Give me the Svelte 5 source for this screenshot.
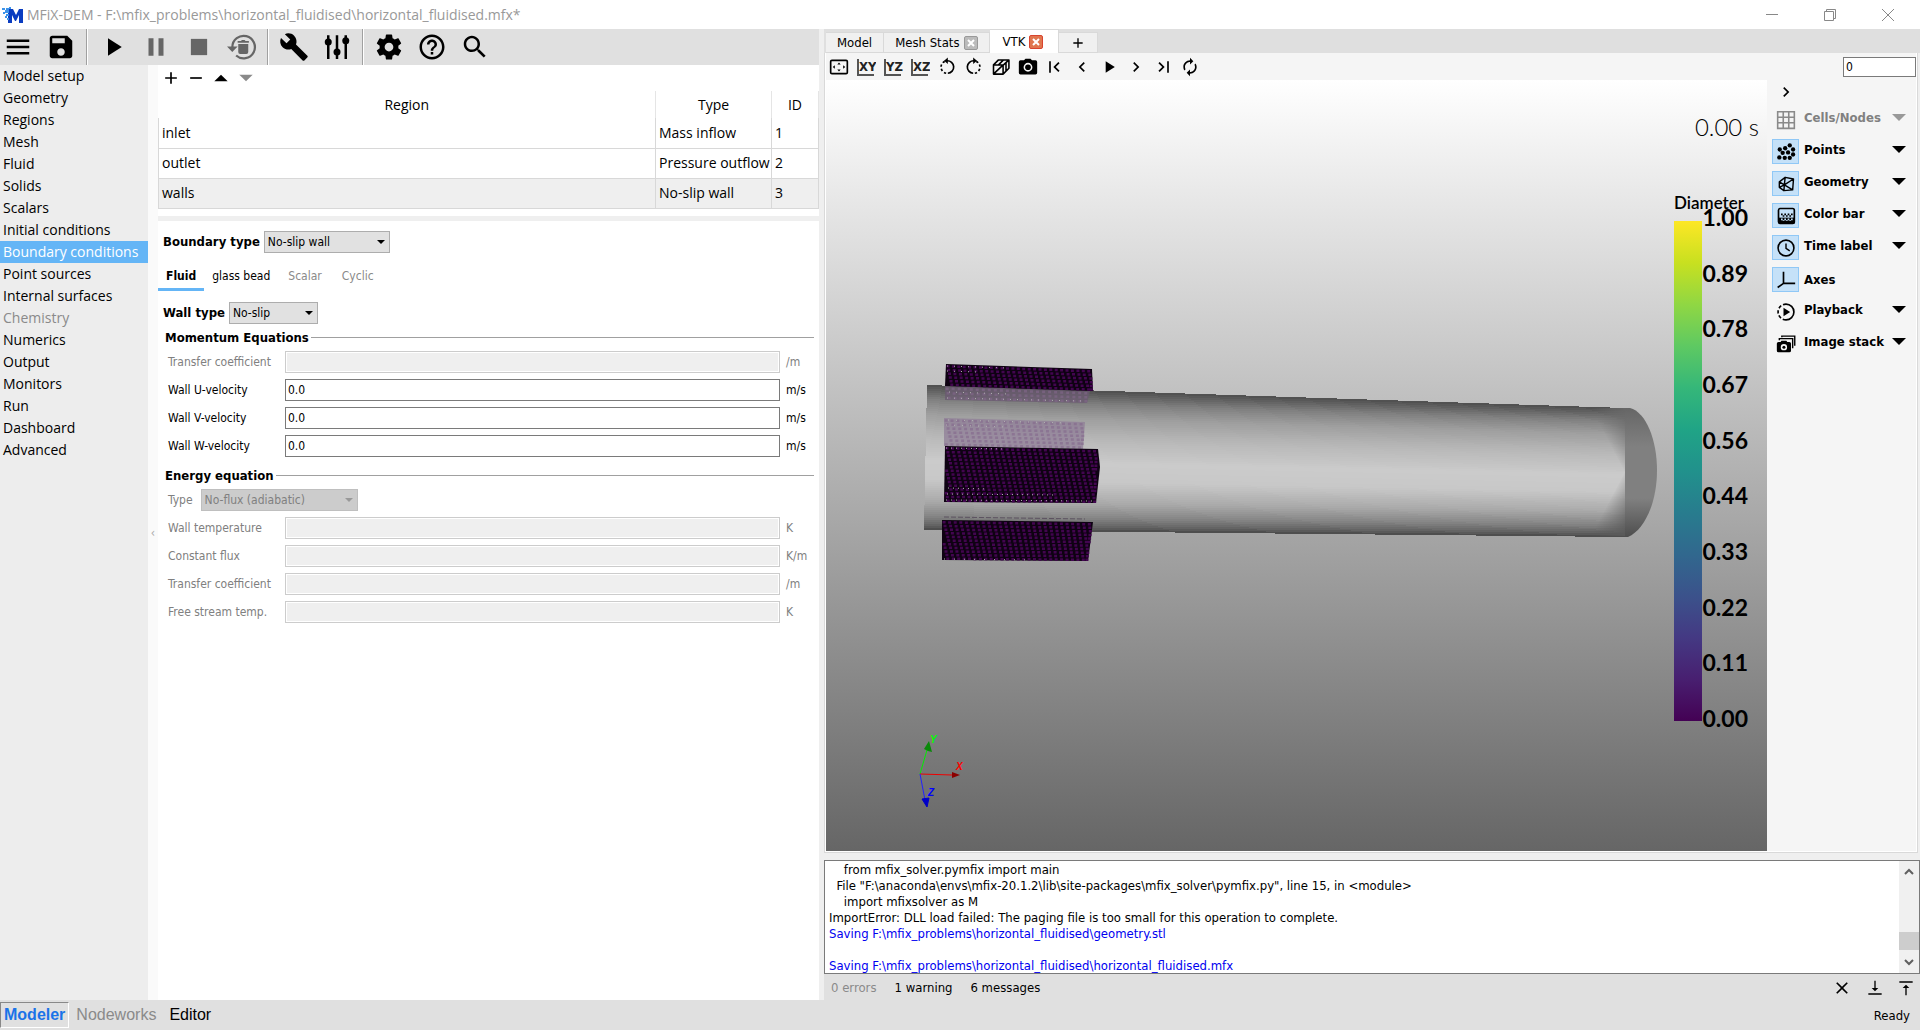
<script>
    const iconPaths = {
        menu: '<path d="M3 18h18v-2H3zm0-5h18v-2H3zm0-7v2h18V6z"/>',
        save: '<path d="M17 3H5c-1.11 0-2 .9-2 2v14c0 1.1.89 2 2 2h14c1.1 0 2-.9 2-2V7l-4-4zm-5 16c-1.66 0-3-1.34-3-3s1.34-3 3-3 3 1.34 3 3-1.34 3-3 3zm3-10H5V5h10v4z"/>',
        play: '<path d="M8 5v14l11-7z"/>',
        pause: '<path d="M6 19h4V5H6zm8-14v14h4V5z"/>',
        stop: '<path d="M5.500 5.500h13v13h-13z"/>',
        reset: '<path d="M4.300 12a9 9 0 1 1 3 6.800" fill="none" stroke="currentColor" stroke-width="1.800"/><path d="M0 11.500h8.500L4.200 16zM9 9.500h8V16a1.500 1.500 0 0 1-1.500 1.500h-5A1.500 1.500 0 0 1 9 16zM8.500 7.200h2.700l.7-.8h2.200l.7.8h2.700v1.300h-9z"/>',
        wrench: '<path d="M22.700 19l-9.100-9.100c.9-2.300.4-5-1.500-6.900-2-2-5-2.400-7.400-1.300L9 6 6 9 1.600 4.700C.4 7.100.9 10.100 2.900 12.100c1.900 1.900 4.600 2.400 6.900 1.500l9.100 9.100c.4.400 1 .4 1.400 0l2.300-2.300c.5-.4.5-1.100.1-1.400z"/>',
        sliders: '<path d="M4 2.500h2v19H4zM11 2.500h2v19h-2zM18 2.500h2v19h-2z"/><circle cx="5" cy="8" r="2.800"/><circle cx="12" cy="16" r="2.800"/><circle cx="19" cy="7" r="2.800"/>',
        gear: '<path d="M19.430 12.980c.04-.32.070-.64.070-.98s-.03-.66-.07-.98l2.110-1.650c.19-.15.240-.42.120-.64l-2-3.460c-.12-.22-.39-.3-.61-.22l-2.490 1c-.52-.4-1.080-.73-1.690-.98l-.38-2.650C14.460 2.180 14.250 2 14 2h-4c-.25 0-.46.180-.49.420l-.38 2.650c-.61.250-1.170.590-1.690.980l-2.490-1c-.23-.09-.49 0-.61.220l-2 3.460c-.13.220-.07.490.120.640l2.110 1.650c-.04.320-.07.650-.07.980s.03.660.070.980l-2.110 1.650c-.19.150-.24.420-.12.640l2 3.460c.12.220.390.300.610.220l2.490-1c.52.400 1.080.730 1.690.980l.38 2.650c.03.240.240.420.490.420h4c.25 0 .46-.18.490-.42l.38-2.650c.61-.25 1.170-.59 1.690-.98l2.490 1c.23.090.490 0 .61-.22l2-3.460c.12-.22.070-.49-.12-.64l-2.110-1.650zM12 15.500c-1.930 0-3.500-1.570-3.500-3.500s1.570-3.500 3.500-3.500 3.500 1.570 3.500 3.500-1.570 3.500-3.500 3.500z"/>',
        help: '<path d="M11 18h2v-2h-2zm1-16C6.480 2 2 6.480 2 12s4.480 10 10 10 10-4.480 10-10S17.520 2 12 2zm0 18c-4.410 0-8-3.590-8-8s3.590-8 8-8 8 3.590 8 8-3.590 8-8 8zm0-14c-2.210 0-4 1.790-4 4h2c0-1.100.9-2 2-2s2 .9 2 2c0 2-3 1.750-3 5h2c0-2.250 3-2.500 3-5 0-2.210-1.790-4-4-4z"/>',
        search: '<path d="M15.500 14h-.79l-.28-.27C15.410 12.590 16 11.110 16 9.500 16 5.910 13.090 3 9.500 3S3 5.910 3 9.500 5.910 16 9.500 16c1.610 0 3.090-.59 4.230-1.570l.27.280v.79l5 4.990L20.490 19l-4.990-5zm-6 0C7.010 14 5 11.990 5 9.500S7.010 5 9.500 5 14 7.010 14 9.500 11.990 14 9.500 14z"/>',
        plus: '<path d="M11 5h2v6h6v2h-6v6h-2v-6H5v-2h6z"/>',
        minus: '<path d="M5 11h14v2H5z"/>',
        up: '<path d="M4 16l8-8 8 8z"/>',
        down: '<path d="M4 8h16l-8 8z"/>',
        frame: '<rect x="2" y="4" width="20" height="16" rx="1.500" fill="none" stroke="currentColor" stroke-width="2"/><path d="M12 6.500l2 2.500h-4zM12 17.500l2-2.500h-4zM4.500 12L7 10v4zM19.500 12L17 10v4z"/>',
        rotateLeft: '<path d="M12 4.500a7.500 7.500 0 0 1 1 15" fill="none" stroke="currentColor" stroke-width="2"/><path d="M11 19.500a7.500 7.500 0 0 1-1-14.500" fill="none" stroke="currentColor" stroke-width="2" stroke-dasharray="2.800 2.500"/><path d="M13 .5v8L8.500 4.500z"/>',
        rotateRight: '<path d="M12 4.500a7.500 7.500 0 0 0-1 15" fill="none" stroke="currentColor" stroke-width="2"/><path d="M13 19.500A7.500 7.500 0 0 0 14 5" fill="none" stroke="currentColor" stroke-width="2" stroke-dasharray="2.800 2.500"/><path d="M11 .5v8l4.500-4z"/>',
        cube: '<path d="M3 9.500l6-6h12.500L15 9.500zM3 9.500v11h11.500v-11M21.500 3.500v10l-7 7M3.500 20L14 10M9 9.500l6-6M18 7v10" fill="none" stroke="currentColor" stroke-width="1.900" stroke-linejoin="round"/>',
        camera: '<path fill-rule="evenodd" d="M9 2L7.200 4H3a2 2 0 0 0-2 2v13a2 2 0 0 0 2 2h18a2 2 0 0 0 2-2V6a2 2 0 0 0-2-2h-4.200L15 2zm3 5a5.300 5.300 0 1 1 0 10.600A5.300 5.300 0 0 1 12 7z"/><circle cx="12" cy="12.300" r="3.400"/>',
        first: '<path d="M5 5h2v14H5zM17.500 7.400L16 6l-6 6 6 6 1.500-1.400L12.900 12z"/>',
        prev: '<path d="M15.400 7.400L14 6l-6 6 6 6 1.400-1.400-4.600-4.600z"/>',
        next: '<path d="M10 6L8.600 7.400l4.600 4.600-4.600 4.600L10 18l6-6z"/>',
        last: '<path d="M17 5h2v14h-2zM6.500 7.400L8 6l6 6-6 6-1.500-1.400L11.100 12z"/>',
        loop: '<path d="M12 6v3l4-4-4-4v3c-4.420 0-8 3.580-8 8 0 1.570.460 3.030 1.240 4.260L6.700 14.800c-.45-.83-.7-1.790-.7-2.800 0-3.310 2.690-6 6-6zm6.760 1.740L17.300 9.200c.44.840.7 1.790.7 2.800 0 3.310-2.690 6-6 6v-3l-4 4 4 4v-3c4.420 0 8-3.580 8-8 0-1.570-.46-3.030-1.240-4.260z"/>',
        grid: '<path d="M2 2h20v20H2zM2 8.700h20M2 15.300h20M8.700 2v20M15.300 2v20" fill="none" stroke="currentColor" stroke-width="1.900"/>',
        points: '<circle cx="4.500" cy="9" r="2.600"/><circle cx="11" cy="7.500" r="2.600"/><circle cx="16.500" cy="4" r="2.600"/><circle cx="20.500" cy="9" r="2.600"/><circle cx="8" cy="13" r="2.600"/><circle cx="14.500" cy="12.500" r="2.600"/><circle cx="20.500" cy="15" r="2.600"/><circle cx="4" cy="18.500" r="2.600"/><circle cx="10.500" cy="19" r="2.600"/><circle cx="16.500" cy="19" r="2.600"/>',
        geometry: '<path d="M4 9.500l7-5.500 10 2-1 13-10.500 1L4 16zM4 9.500l6 3.500 11-7M11 4l-1 9 10 6M10 13l-6 3M10 13l-.5 7" fill="none" stroke="currentColor" stroke-width="1.700" stroke-linejoin="round"/>',
        colorbar: '<rect x="3" y="3" width="19" height="18" rx="2" fill="none" stroke="currentColor" stroke-width="2"/><path d="M3 14h19v7H3z"/><path d="M6 9h2v2H6zM10 9h2v2h-2zM14 9h2v2h-2zM18 9h2v2h-2zM8 11h2v2H8zM12 11h2v2h-2zM16 11h2v2h-2z"/><path fill="#c5e1f8" d="M6 15h2v2H6zM10 15h2v2h-2zM14 15h2v2h-2zM18 15h2v2h-2zM8 17h2v1H8zM12 17h2v1h-2zM16 17h2v1h-2z"/>',
        clock: '<circle cx="12" cy="12" r="9.500" fill="none" stroke="currentColor" stroke-width="1.900"/><path d="M12 6.500v6l4.500 3" fill="none" stroke="currentColor" stroke-width="1.700"/>',
        axes: '<path d="M9 2v14h14M9 16l-7 5" fill="none" stroke="currentColor" stroke-width="2"/>',
        playback: '<path d="M12 2.500a9.500 9.500 0 0 1 0 19" fill="none" stroke="currentColor" stroke-width="2"/><path d="M12 21.500a9.500 9.500 0 0 1 0-19" fill="none" stroke="currentColor" stroke-width="2" stroke-dasharray="4 2.500"/><path d="M9 7v10l8-5z"/>',
        stack: '<path fill-rule="evenodd" d="M6.500 8L5.500 9.500H3a2 2 0 0 0-2 2V20a2 2 0 0 0 2 2h13a2 2 0 0 0 2-2v-8.500a2 2 0 0 0-2-2h-2.500L12.500 8zm3 4a3.800 3.800 0 1 1 0 7.600 3.800 3.800 0 0 1 0-7.600z"/><circle cx="9.500" cy="15.800" r="1.800"/><path d="M4 7.500V5.500h16V17M7 4V2.500h15.500V14" fill="none" stroke="currentColor" stroke-width="1.700"/>',
        close: '<path d="M19 6.400L17.600 5 12 10.600 6.400 5 5 6.400l5.600 5.600L5 17.600 6.400 19l5.600-5.600 5.600 5.600 1.400-1.400-5.600-5.600z"/>',
        toBottom: '<path d="M11 1h2v11h4l-5 5-5-5h4zM2 20h20v2H2z"/>',
        toTop: '<path d="M2 2h20v2H2zM11 23h2V12h4l-5-5-5 5h4z"/>'
    }

    const mainTools = [
        { icon: "menu" }, { icon: "save" }, null,
        { icon: "play" }, { icon: "pause", off: true }, { icon: "stop", off: true }, { icon: "reset", off: true }, null,
        { icon: "wrench" }, { icon: "sliders" }, null,
        { icon: "gear" }, { icon: "help" }, { icon: "search" }
    ]

    const pages = [
        "Model setup", "Geometry", "Regions", "Mesh", "Fluid", "Solids", "Scalars", "Initial conditions",
        "Boundary conditions", "Point sources", "Internal surfaces", "Chemistry", "Numerics", "Output",
        "Monitors", "Run", "Dashboard", "Advanced"
    ]
    let currentPage = "Boundary conditions"

    const regions = [
        { name: "inlet", type: "Mass inflow", id: 1 },
        { name: "outlet", type: "Pressure outflow", id: 2 },
        { name: "walls", type: "No-slip wall", id: 3 }
    ]
    let currentRegion = 3

    const momentum = [
        { id: "mom-coeff", label: "Transfer coefficient", unit: "/m", off: true },
        { id: "mom-u", label: "Wall U-velocity", unit: "m/s", value: "0.0" },
        { id: "mom-v", label: "Wall V-velocity", unit: "m/s", value: "0.0" },
        { id: "mom-w", label: "Wall W-velocity", unit: "m/s", value: "0.0" }
    ]
    const energy = [
        { id: "en-temp", label: "Wall temperature", unit: "K", off: true },
        { id: "en-flux", label: "Constant flux", unit: "K/m", off: true },
        { id: "en-coeff", label: "Transfer coefficient", unit: "/m", off: true },
        { id: "en-free", label: "Free stream temp.", unit: "K", off: true }
    ]

    const vtkTools = [
        "frame", "XY", "YZ", "XZ", "rotateLeft", "rotateRight", "cube", "camera",
        "first", "prev", "play", "next", "last", "loop"
    ]

    const layers = [
        { label: "Cells/Nodes", icon: "grid", off: true, menu: true },
        { label: "Points", icon: "points", on: true, menu: true },
        { label: "Geometry", icon: "geometry", on: true, menu: true },
        { label: "Color bar", icon: "colorbar", on: true, menu: true },
        { label: "Time label", icon: "clock", on: true, menu: true },
        { label: "Axes", icon: "axes", on: true },
        { label: "Playback", icon: "playback", menu: true },
        { label: "Image stack", icon: "stack", menu: true }
    ]

    const log = [
        { text: "    from mfix_solver.pymfix import main" },
        { text: "  File \"F:\\anaconda\\envs\\mfix-20.1.2\\lib\\site-packages\\mfix_solver\\pymfix.py\", line 15, in <module>" },
        { text: "    import mfixsolver as M" },
        { text: "ImportError: DLL load failed: The paging file is too small for this operation to complete." },
        { text: "Saving F:\\mfix_problems\\horizontal_fluidised\\geometry.stl", info: true },
        { text: " " },
        { text: "Saving F:\\mfix_problems\\horizontal_fluidised\\horizontal_fluidised.mfx", info: true }
    ]

    const ticks = ["0.00", "0.11", "0.22", "0.33", "0.44", "0.56", "0.67", "0.78", "0.89", "1.00"]
    const viridis = ["#fde725", "#c8e020", "#90d743", "#5ec962", "#35b779", "#20a486", "#21918c", "#287c8e", "#31688e", "#3b528b", "#443983", "#481f70", "#440154"]

    // grey level over the height of the tube, 0 = top edge
    const shade = [[0, 78], [0.04, 98], [0.1, 128], [0.2, 158], [0.35, 184], [0.52, 203], [0.65, 200], [0.8, 170], [0.9, 135], [0.97, 98], [1, 72]]

    function greyAt(t) {
        const i = Math.max(1, shade.findIndex(([stop]) => stop >= t))
        const [t0, g0] = shade[i - 1]
        const [t1, g1] = shade[i]
        return Math.round(g0 + ((g1 - g0) * (t - t0)) / (t1 - t0))
    }

    // the tube tapers, so it is shaded in thin bands that follow both edges
    const bandCount = 72
    const bands = Array.from({ length: bandCount }, (_, i) => {
        const a = i / bandCount
        const b = Math.min(1, (i + 1.6) / bandCount)
        const g = greyAt((i + 0.5) / bandCount)
        const left = (t) => `${101 - 3 * t},${305 + 145 * t}`
        const right = (t) => `799,${328 + 129 * t}`
        return { points: `${left(a)} ${right(a)} ${right(b)} ${left(b)}`, fill: `rgb(${g},${g},${g})` }
    })

    // particles on a quad: corners are top-left, top-right, bottom-right, bottom-left
    function particles([tl, tr, br, bl], cols, rows) {
        let d = ""
        for (let r = 0; r < rows; r++) {
            for (let c = 0; c < cols; c++) {
                const v = (r + 0.3) / rows
                const u = Math.min(0.98, (c + 0.1 + ((r * 0.17) % 1)) / cols)
                const x = (1 - v) * (tl[0] + (tr[0] - tl[0]) * u) + v * (bl[0] + (br[0] - bl[0]) * u)
                const y = (1 - v) * (tl[1] + (tr[1] - tl[1]) * u) + v * (bl[1] + (br[1] - bl[1]) * u)
                d += `M${x.toFixed(1)} ${y.toFixed(1)}h3v2.5h-3z`
            }
        }
        return d
    }

    const blocks = [
        { quad: [[120, 284], [266, 289], [267, 311], [119, 306]], cols: 27, rows: 6 },
        { quad: [[119, 366], [272, 369], [274, 387], [270, 423], [118, 422]], cols: 28, rows: 15 },
        { quad: [[116, 440], [267, 442], [262, 481], [116, 480]], cols: 27, rows: 11 }
    ].map((b) => {
        const corners = b.quad.length === 5 ? [b.quad[0], b.quad[1], b.quad[3], b.quad[4]] : b.quad
        return { outline: b.quad.join(" "), dots: particles(corners, b.cols, b.rows) }
    })

    const ghosts = [
        [[119, 306], [264, 311], [261, 323], [119, 320]],
        [[118, 338], [259, 342], [257, 369], [118, 366]]
    ].map((quad, i) => ({
        outline: quad.join(" "),
        dots: particles(quad, 24, i ? 7 : 3),
        fill: i ? "#8f7d97" : "#6a5a70"
    }))
</script>

{#snippet icon(name, size)}
    <svg class="icon" width={size} height={size} viewBox="0 0 24 24" fill="currentColor" aria-hidden="true">{@html iconPaths[name]}</svg>
{/snippet}

{#snippet fieldRow(field)}
    <div class="field" class:off={field.off}>
        <label for={field.id}>{field.label}</label>
        <input id={field.id} type="text" value={field.value ?? ""} disabled={field.off} />
        <span class="unit">{field.unit}</span>
    </div>
{/snippet}

<div class="app">
    <header class="titlebar">
        <svg class="logo" width="22" height="18" viewBox="0 0 22 18" aria-hidden="true">
            <path d="M6 3h5l3 6 3-6h4v14h-4V9l-3 6h-1l-3-6v8H6z" fill="#0a3cc0" />
            <path d="M0 2h3v2H0zM4 2h3v2H4zM3 4h4v3H3zM1 6h2v2H1zM4 8h3v2H4zM7 1h2v2H7zM3 10h2v2H3zM5 12h2v2H5z" fill="#3d93e8" />
        </svg>
        <h1>MFiX-DEM - F:\mfix_problems\horizontal_fluidised\horizontal_fluidised.mfx*</h1>
        <div class="window-buttons">
            <button aria-label="Minimize"><svg width="12" height="12" viewBox="0 0 12 12"><path d="M0 5.500h12" /></svg></button>
            <button aria-label="Restore"><svg width="12" height="12" viewBox="0 0 12 12"><path d="M.5 2.500h9v9h-9zM2.500 2.500v-2h9v9h-2" /></svg></button>
            <button aria-label="Close"><svg width="12" height="12" viewBox="0 0 12 12"><path d="M0 0l12 12M12 0L0 12" /></svg></button>
        </div>
    </header>

    <main>
        <section class="modeler">
            <div class="main-tools">
                {#each mainTools as tool}
                    {#if tool}
                        <button disabled={tool.off} aria-label={tool.icon}>{@render icon(tool.icon, 30)}</button>
                    {:else}
                        <span class="separator"></span>
                    {/if}
                {/each}
            </div>

            <div class="workspace">
                <nav>
                    {#each pages as page}
                        <button
                            class:active={page === currentPage}
                            disabled={page === "Chemistry"}
                            on:click={() => (currentPage = page)}
                        >{page}</button>
                    {/each}
                </nav>
                <div class="gutter">‹</div>

                <div class="pane">
                    <div class="list-tools">
                        <button aria-label="Add">{@render icon("plus", 20)}</button>
                        <button aria-label="Remove">{@render icon("minus", 20)}</button>
                        <button aria-label="Move up">{@render icon("up", 20)}</button>
                        <button aria-label="Move down" disabled>{@render icon("down", 20)}</button>
                    </div>

                    <table>
                        <thead>
                            <tr><th>Region</th><th class="type">Type</th><th class="id">ID</th></tr>
                        </thead>
                        <tbody>
                            {#each regions as region}
                                <tr class:selected={region.id === currentRegion} on:click={() => (currentRegion = region.id)}>
                                    <td>{region.name}</td>
                                    <td>{region.type}</td>
                                    <td>{region.id}</td>
                                </tr>
                            {/each}
                        </tbody>
                    </table>

                    <div class="splitter"></div>

                    <div class="form">
                        <div class="choice">
                            <label for="boundary-type">Boundary type</label>
                            <span class="combo wide">
                                <select id="boundary-type"><option>No-slip wall</option></select>
                                <i></i>
                            </span>
                        </div>

                        <div class="subtabs">
                            <button class="active">Fluid</button>
                            <button>glass bead</button>
                            <button disabled>Scalar</button>
                            <button disabled>Cyclic</button>
                        </div>

                        <div class="choice">
                            <label for="wall-type">Wall type</label>
                            <span class="combo narrow">
                                <select id="wall-type"><option>No-slip</option></select>
                                <i></i>
                            </span>
                        </div>

                        <h2>Momentum Equations</h2>
                        <div class="fields">
                            {#each momentum as field}
                                {@render fieldRow(field)}
                            {/each}
                        </div>

                        <h2>Energy equation</h2>
                        <div class="fields">
                            <div class="choice off">
                                <label for="energy-type">Type</label>
                                <span class="combo energy">
                                    <select id="energy-type" disabled><option>No-flux (adiabatic)</option></select>
                                    <i></i>
                                </span>
                            </div>
                            {#each energy as field}
                                {@render fieldRow(field)}
                            {/each}
                        </div>
                    </div>
                </div>
            </div>
        </section>

        <section class="viewer">
            <div class="tabs">
                <div class="tab"><button>Model</button></div>
                <div class="tab">
                    <button>Mesh Stats</button>
                    <button class="close" aria-label="Close Mesh Stats"><svg width="8" height="8" viewBox="0 0 8 8"><path d="M1 1l6 6M7 1L1 7" /></svg></button>
                </div>
                <div class="tab current">
                    <button>VTK</button>
                    <button class="close" aria-label="Close VTK"><svg width="8" height="8" viewBox="0 0 8 8"><path d="M1 1l6 6M7 1L1 7" /></svg></button>
                </div>
                <div class="tab"><button aria-label="New tab">{@render icon("plus", 16)}</button></div>
            </div>

            <div class="vtk">
                <div class="vtk-tools">
                    {#each vtkTools as tool}
                        <button aria-label={tool}>
                            {#if iconPaths[tool]}
                                {@render icon(tool, 20)}
                            {:else}
                                <svg class="plane" width="20" height="20" viewBox="0 0 20 20">
                                    <path d="M2 2v16h16" />
                                    <text x="3" y="14">{tool}</text>
                                </svg>
                            {/if}
                        </button>
                    {/each}
                    <input class="frame-number" type="text" value="0" aria-label="Frame" />
                </div>

                <div class="scene-row">
                    <div class="scene">
                        <svg viewBox="0 0 941 771">
                            <defs>
                                <linearGradient id="viridis" x1="0" y1="0" x2="0" y2="1">
                                    {#each viridis as color, i}
                                        <stop offset={i / (viridis.length - 1)} stop-color={color} />
                                    {/each}
                                </linearGradient>
                                <linearGradient id="cap" x1="0" y1="0" x2="0" y2="1">
                                    <stop offset="0" stop-color="#666" />
                                    <stop offset="0.3" stop-color="#808080" />
                                    <stop offset="0.7" stop-color="#808080" />
                                    <stop offset="1" stop-color="#4e4e4e" />
                                </linearGradient>
                                <linearGradient id="cone-top" gradientUnits="userSpaceOnUse" x1="772" y1="342" x2="799" y2="328">
                                    <stop offset="0" stop-color="#6a6a6a" stop-opacity="0" />
                                    <stop offset="1" stop-color="#6a6a6a" stop-opacity="0.9" />
                                </linearGradient>
                                <linearGradient id="cone-bottom" gradientUnits="userSpaceOnUse" x1="772" y1="442" x2="799" y2="456">
                                    <stop offset="0" stop-color="#5a5a5a" stop-opacity="0" />
                                    <stop offset="1" stop-color="#5a5a5a" stop-opacity="0.9" />
                                </linearGradient>
                            </defs>

                            <path d="M798 328h6C820 332 831 360 831 390C831 424 818 450 802 457H798z" fill="url(#cap)" />
                            <g shape-rendering="crispEdges">
                                {#each bands as band}
                                    <polygon points={band.points} fill={band.fill} />
                                {/each}
                            </g>
                            <path d="M765 328h34v64z" fill="url(#cone-top)" />
                            <path d="M765 456h34v-64z" fill="url(#cone-bottom)" />

                            {#each ghosts as ghost}
                                <polygon points={ghost.outline} fill={ghost.fill} fill-opacity="0.75" />
                                <path d={ghost.dots} fill="#83688c" fill-opacity="0.6" />
                            {/each}
                            {#each blocks as block}
                                <polygon points={block.outline} fill="#0e0212" />
                                <path d={block.dots} fill="#42054f" />
                            {/each}
                            <path d="M118 437l141 2" stroke="#5c5260" stroke-dasharray="5 2" />
                            <g class="gaps">
                                <path d="M120 420l146 1M121 414l110 1M120 368l60 1M122 408l40 1" stroke-dasharray="1 4" />
                                <path d="M122 340l120 3M120 345l60 2" stroke-dasharray="1 7" />
                                <path d="M121 286l60 2M121 291l30 1" stroke-dasharray="1 6" />
                                <path d="M118 479l90 1" stroke-dasharray="1 9" />
                                <path d="M121 318l135 3M123 312l60 2" stroke-dasharray="1 6" />
                            </g>

                            <rect x="848" y="141" width="28" height="500" fill="url(#viridis)" />
                            {#each ticks as tick, i}
                                <text class="tick" x="922" y={647 - (i * 501) / 9}>{tick}</text>
                            {/each}
                            <text class="bar-title" x="848" y="129">Diameter</text>
                            <text class="time" x="933" y="56">0.00 s</text>

                            <g class="triad">
                                <path d="M94 694L101 670" stroke="#0e0" />
                                <path d="M103 661l-5 8 4 2 4 1z" fill="#0a8a0a" />
                                <path d="M94 694l32 1" stroke="#e00" />
                                <path d="M134 695l-8-3v6z" fill="#8a0000" />
                                <path d="M94 694l5 26" stroke="#22f" />
                                <path d="M101 727l-5-8 7-1z" fill="#0000c8" stroke="#0000c8" />
                                <text x="104" y="663" fill="#0f0">Y</text>
                                <text x="130" y="690" fill="#f00">X</text>
                                <text x="102" y="716" fill="#00f">Z</text>
                            </g>
                        </svg>
                    </div>

                    <aside>
                        <button class="collapse" aria-label="Collapse">{@render icon("next", 20)}</button>
                        {#each layers as layer}
                            <div class="layer" class:off={layer.off} class:menu={layer.menu}>
                                <button class="toggle" class:on={layer.on} disabled={layer.off} aria-label={layer.label}>
                                    {@render icon(layer.icon, 20)}
                                </button>
                                <span>{layer.label}</span>
                                {#if layer.menu}
                                    <button class="expand" disabled={layer.off} aria-label="{layer.label} options"></button>
                                {/if}
                            </div>
                        {/each}
                    </aside>
                </div>
            </div>

            <div class="console">
                <pre>{#each log as line}<span class:info={line.info}>{line.text}</span>{/each}</pre>
                <div class="scrollbar">
                    <svg width="10" height="7" viewBox="0 0 10 7"><path d="M1 6l4-4 4 4" /></svg>
                    <div class="thumb"></div>
                    <svg width="10" height="7" viewBox="0 0 10 7"><path d="M1 1l4 4 4-4" /></svg>
                </div>
            </div>

            <div class="console-bar">
                <button disabled>0 errors</button>
                <button>1 warning</button>
                <button>6 messages</button>
                <div class="console-tools">
                    <button aria-label="Clear">{@render icon("close", 20)}</button>
                    <button aria-label="Scroll to bottom">{@render icon("toBottom", 16)}</button>
                    <button aria-label="Scroll to top">{@render icon("toTop", 16)}</button>
                </div>
            </div>
        </section>
    </main>

    <footer>
        <button class="mode current">Modeler</button>
        <button class="mode" disabled>Nodeworks</button>
        <button class="mode">Editor</button>
        <span class="status">Ready</span>
    </footer>
</div>

<style>
    :global(body) {
        margin: 0;
    }
    .app {
        --ui: "Open Sans", "Noto Sans", sans-serif;
        --small: "DejaVu Sans Condensed", "DejaVu Sans", sans-serif;
        display: flex;
        flex-direction: column;
        min-height: 100vh;
        background: #efefef;
        color: #000;
        font: 12px/16px var(--small);
    }
    .app * {
        box-sizing: border-box;
    }
    button {
        display: flex;
        align-items: center;
        justify-content: center;
        margin: 0;
        padding: 0;
        border: 0;
        background: none;
        color: inherit;
        font: inherit;
    }
    button:disabled {
        color: #8a8a8a;
    }
    .icon {
        display: block;
    }

    .titlebar {
        display: flex;
        align-items: center;
        height: 29px;
        padding: 0 3px 0 2px;
        background: #fff;
        color: #999;
    }
    .titlebar h1 {
        flex: 1;
        margin: 0 0 0 3px;
        font: 14px/20px var(--ui);
    }
    .window-buttons {
        display: flex;
    }
    .window-buttons button {
        width: 58px;
        height: 29px;
    }
    .window-buttons path {
        fill: none;
        stroke: #888;
    }

    main {
        flex: 1;
        display: grid;
        grid-template-columns: minmax(0, 819fr) minmax(0, 1096fr);
        gap: 5px;
    }

    /* left side */
    .modeler {
        display: flex;
        flex-direction: column;
    }
    .main-tools {
        display: flex;
        gap: 7px;
        height: 36px;
        background: #e0e0e0;
    }
    .main-tools button {
        width: 36px;
    }
    .main-tools button:disabled {
        color: #666;
    }
    .separator {
        width: 2px;
        border-left: 1px solid #a0a0a0;
        background: #fff;
    }
    .workspace {
        flex: 1;
        display: flex;
        background: #fff;
    }
    nav {
        flex: 0 0 148px;
        background: #ededed;
        font: 14px/22px var(--ui);
    }
    nav button {
        justify-content: flex-start;
        width: 100%;
        height: 22px;
        padding-left: 3px;
        white-space: nowrap;
    }
    nav .active {
        background: #64b5f6;
        color: #fff;
    }
    .gutter {
        display: flex;
        align-items: center;
        justify-content: center;
        flex: 0 0 10px;
        background: #fafafa;
        color: #aaa;
    }
    .pane {
        flex: 1;
        min-width: 0;
    }
    .list-tools {
        display: flex;
        align-items: center;
        gap: 5px;
        height: 26px;
        padding-left: 3px;
    }

    table {
        width: 100%;
        border-collapse: collapse;
        table-layout: fixed;
        font: 14px/20px var(--ui);
    }
    th {
        height: 27px;
        padding: 0;
        border-right: 1px solid #e5e5e5;
        font-weight: normal;
    }
    td {
        height: 30px;
        padding: 0 3px;
        border: 1px solid #d8d8d8;
        border-top: 0;
        white-space: nowrap;
    }
    .type {
        width: 116px;
    }
    .id {
        width: 47px;
    }
    .selected {
        background: #efefef;
    }
    .splitter {
        height: 5px;
        margin-top: 7px;
        background: #efefef;
    }

    .form {
        padding-top: 10px;
    }
    .choice {
        display: flex;
        align-items: center;
        gap: 4px;
        height: 22px;
        padding-left: 5px;
        font-weight: bold;
        font-size: 13px;
    }
    .combo {
        position: relative;
    }
    .wide {
        width: 126px;
    }
    .narrow {
        width: 89px;
    }
    .energy {
        width: 157px;
    }
    .combo select {
        display: block;
        width: 100%;
        height: 22px;
        padding: 0 3px;
        border: 1px solid #adadad;
        border-radius: 0;
        appearance: none;
        background: #e1e1e1;
        color: #000;
        font: 12px/16px var(--small);
    }
    .combo i {
        position: absolute;
        top: 9px;
        right: 5px;
        border: 4px solid transparent;
        border-top-color: #000;
        border-bottom: 0;
        pointer-events: none;
    }
    .off {
        color: #808080;
    }
    .off select {
        border-color: #bfbfbf;
        background: #ccc;
        color: #808080;
        opacity: 1;
    }
    .off i {
        border-top-color: #999;
    }
    .subtabs {
        display: flex;
        margin: 8px 0 11px;
    }
    .subtabs button {
        height: 30px;
        padding: 3px 8px 0;
        border-bottom: 3px solid transparent;
    }
    .subtabs button:disabled {
        padding: 3px 10px 0;
    }
    .subtabs .active {
        border-color: #64b5f6;
        font-weight: bold;
    }

    h2 {
        display: flex;
        align-items: center;
        gap: 2px;
        height: 16px;
        margin: 6px 5px 5px 7px;
        font: bold 13px/16px var(--small);
    }
    h2::after {
        flex: 1;
        height: 1px;
        background: #a0a0a0;
        content: "";
    }
    .fields {
        display: flex;
        flex-direction: column;
        gap: 6px;
        margin-bottom: 11px;
    }
    .fields .choice {
        gap: 8px;
        padding-left: 10px;
        font-weight: normal;
        font-size: 12px;
    }
    .field {
        display: grid;
        grid-template-columns: 117px 1fr 39px;
        align-items: center;
        height: 22px;
        padding-left: 10px;
    }
    .field input {
        height: 22px;
        padding: 0 2px;
        border: 1px solid #7a7a7a;
        background: #fff;
        font: 12px/16px var(--small);
    }
    .field input:disabled {
        border-color: #ccc;
        background: #efefef;
        box-shadow: inset 0 0 0 1px #fff;
    }
    .unit {
        padding-left: 6px;
    }

    /* right side */
    .viewer {
        display: flex;
        flex-direction: column;
    }
    .tabs {
        display: flex;
        align-items: flex-end;
        height: 24px;
        padding-left: 2px;
        background: #dfdfdf;
        font-size: 13px;
    }
    .tab {
        display: flex;
        align-items: center;
        gap: 4px;
        height: 21px;
        padding: 0 11px;
        border: 1px solid #d9d9d9;
        border-left: 0;
        background: #f0f0f0;
    }
    .tab.current {
        height: 24px;
        padding: 0 15px 0 13px;
        border-bottom: 0;
        background: #fff;
    }
    .close {
        width: 14px;
        height: 14px;
        border: 1px solid #999;
        border-radius: 2px;
        background: #bbb;
    }
    .current .close {
        border-color: #d9442f;
        background: #e0764f;
    }
    .close path {
        stroke: #fff;
        stroke-width: 2;
    }
    .vtk {
        flex: 1;
        display: flex;
        flex-direction: column;
        margin-right: 2px;
        padding: 0 1px 1px;
        border: 1px solid #d9d9d9;
        border-top: 0;
        background: #fff;
    }
    .vtk-tools {
        display: flex;
        align-items: center;
        gap: 7px;
        height: 27px;
        padding-left: 3px;
        background: #f5f5f5;
    }
    .plane path {
        fill: none;
        stroke: #555;
        stroke-width: 2;
    }
    .plane text {
        font: bold 13px "Liberation Sans Narrow", "DejaVu Sans Condensed", sans-serif;
        fill: #222;
    }
    .frame-number {
        width: 73px;
        height: 20px;
        margin-left: auto;
        padding: 0 2px;
        border: 1px solid #7a7a7a;
        font: 12px/16px var(--small);
    }
    .scene-row {
        flex: 1;
        display: flex;
        background: #f5f5f5;
    }
    .scene {
        flex: 1;
        min-width: 0;
        background: linear-gradient(#fff, #666);
    }
    .scene svg {
        display: block;
        width: 100%;
        height: 100%;
    }
    .gaps path {
        fill: none;
        stroke: #b4b4b4;
    }
    .tick,
    .bar-title,
    .time {
        font-family: Lato, sans-serif;
    }
    .tick {
        font-size: 23px;
        font-weight: bold;
        text-anchor: end;
    }
    .bar-title {
        font-size: 17px;
        font-weight: 600;
    }
    .time {
        font-size: 24px;
        font-weight: 300;
        text-anchor: end;
    }
    .triad text {
        font: italic bold 10px "Liberation Sans", sans-serif;
    }

    aside {
        flex: 0 0 149px;
        display: flex;
        flex-direction: column;
        gap: 7px;
        padding: 3px 0 0 5px;
        font-weight: bold;
        font-size: 13px;
    }
    .collapse {
        width: 27px;
        height: 17px;
    }
    .layer {
        display: flex;
        align-items: center;
        gap: 5px;
        height: 25px;
    }
    .toggle {
        width: 27px;
        height: 25px;
        padding-top: 1px;
        border: 1px solid transparent;
    }
    .toggle.on {
        border-color: #90c8f6;
        background: #c5e1f8;
    }
    .layer.menu span {
        padding-bottom: 3px;
    }
    .expand {
        margin: 0 10px 4px auto;
        border: 7px solid transparent;
        border-top-color: #000;
        border-bottom: 0;
    }
    .expand:disabled {
        border-top-color: #999;
    }

    .console {
        display: flex;
        height: 114px;
        margin-top: 7px;
        border: 1px solid #7a7a7a;
        background: #fff;
    }
    pre {
        flex: 1;
        margin: 0;
        padding: 1px 0 0 4px;
        overflow: hidden;
        font: 13px/16px var(--small);
    }
    pre span {
        display: block;
    }
    .info {
        color: #0000f0;
    }
    .scrollbar {
        display: flex;
        flex-direction: column;
        align-items: center;
        justify-content: space-between;
        width: 20px;
        padding: 7px 0;
        background: #f0f0f0;
    }
    .scrollbar path {
        fill: none;
        stroke: #606060;
        stroke-width: 2;
    }
    .thumb {
        width: 100%;
        height: 18px;
        margin: auto 0 9px;
        background: #cdcdcd;
    }
    .console-bar {
        display: flex;
        align-items: center;
        gap: 18px;
        height: 26px;
        padding: 1px 0 0 7px;
        background: #e0e0e0;
        font-size: 13px;
    }
    .console-tools {
        display: flex;
        align-items: center;
        gap: 15px;
        margin: 0 6px 0 auto;
    }

    footer {
        display: flex;
        align-items: center;
        gap: 7px;
        height: 30px;
        background: #e0e0e0;
    }
    .mode {
        height: 26px;
        padding-right: 6px;
        font: 16px/20px "Liberation Sans", sans-serif;
    }
    .mode.current {
        padding: 0 3px;
        border: 1px solid #888;
        border-right-color: #fff;
        border-bottom-color: #fff;
        color: #1a73e8;
        font-weight: bold;
    }
    .status {
        margin: 1px 10px 0 auto;
        font-size: 13px;
    }
</style>
